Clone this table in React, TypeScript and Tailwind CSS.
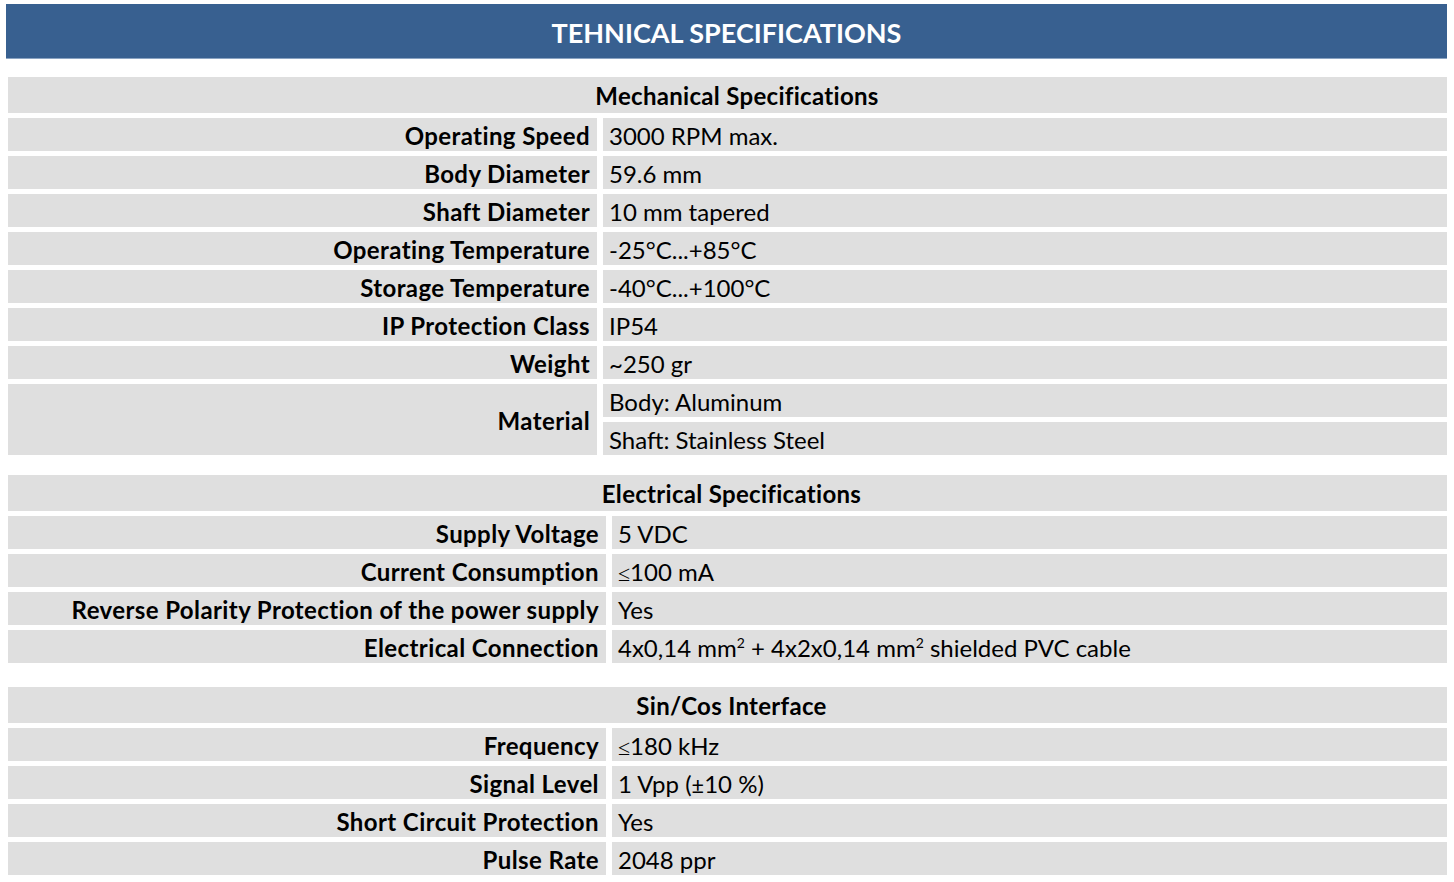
import type { ReactNode } from "react";

type Row = { label: string; values: ReactNode[] };

type Section = {
  title: string;
  titleOffset: string;
  cols: string;
  mt: string;
  rows: Row[];
};

const sq = <sup className="relative -top-[9px] text-[14px]">2</sup>;
const sym = (c: string) => <span className="font-['Noto_Sans'] text-[22px]">{c}</span>;

const sections: Section[] = [
  {
    title: "Mechanical Specifications",
    titleOffset: "pl-[19px]",
    cols: "grid-cols-[589px_1fr]",
    mt: "mt-[18px]",
    rows: [
      { label: "Operating Speed", values: ["3000 RPM max."] },
      { label: "Body Diameter", values: ["59.6 mm"] },
      { label: "Shaft Diameter", values: ["10 mm tapered"] },
      { label: "Operating Temperature", values: ["-25°C...+85°C"] },
      { label: "Storage Temperature", values: ["-40°C...+100°C"] },
      { label: "IP Protection Class", values: ["IP54"] },
      { label: "Weight", values: ["~250 gr"] },
      { label: "Material", values: ["Body: Aluminum", "Shaft: Stainless Steel"] },
    ],
  },
  {
    title: "Electrical Specifications",
    titleOffset: "pl-[8px]",
    cols: "grid-cols-[598px_1fr]",
    mt: "mt-[20px]",
    rows: [
      { label: "Supply Voltage", values: ["5 VDC"] },
      { label: "Current Consumption", values: [<>{sym("≤")}100 mA</>] },
      { label: "Reverse Polarity Protection of the power supply", values: ["Yes"] },
      {
        label: "Electrical Connection",
        values: [
          <>
            4x0,14 mm{sq} + 4x2x0,14 mm{sq} shielded PVC cable
          </>,
        ],
      },
    ],
  },
  {
    title: "Sin/Cos Interface",
    titleOffset: "pl-[8px]",
    cols: "grid-cols-[598px_1fr]",
    mt: "mt-[24px]",
    rows: [
      { label: "Frequency", values: [<>{sym("≤")}180 kHz</>] },
      { label: "Signal Level", values: [<>1 Vpp ({sym("±")}10 %)</>] },
      { label: "Short Circuit Protection", values: ["Yes"] },
      { label: "Pulse Rate", values: ["2048 ppr"] },
    ],
  },
];

function SpecSection({ s }: { s: Section }) {
  return (
    <div className={`grid ${s.cols} gap-x-[6px] gap-y-[5px] ${s.mt}`}>
      <div
        className={`col-span-2 flex h-[36px] items-center justify-center bg-[#dfdfdf] pt-[2px] text-[24px] font-bold tracking-[0.3px] text-black ${s.titleOffset}`}
      >
        {s.title}
      </div>
      {s.rows.map((r) => (
        <div key={r.label} className="contents">
          <div
            className={`flex items-center justify-end bg-[#dfdfdf] pr-[7px] pt-[2px] text-[24px] font-bold tracking-[0.4px] text-black ${
              r.values.length > 1 ? "row-span-2" : "h-[33px]"
            }`}
          >
            {r.label}
          </div>
          {r.values.map((v, i) => (
            <div
              key={i}
              className={`flex h-[33px] items-center bg-[#dfdfdf] pl-[6px] pt-[2px] text-[24px] text-black ${
                i > 0 ? "col-start-2" : ""
              }`}
            >
              <span>{v}</span>
            </div>
          ))}
        </div>
      ))}
    </div>
  );
}

export default function App() {
  return (
    <div
      className="min-h-screen bg-white pt-[4px]"
      style={{ fontFamily: "Lato, 'Open Sans', sans-serif" }}
    >
      <div className="ml-[6px] mr-[7px] flex h-[55px] items-center justify-center border-b border-[#8aa3c2] bg-[#386090] pt-[5px]">
        <h1 className="text-[27px] font-bold text-white">TEHNICAL SPECIFICATIONS</h1>
      </div>
      <div className="ml-[8px] mr-[7px]">
        {sections.map((s) => (
          <SpecSection key={s.title} s={s} />
        ))}
      </div>
    </div>
  );
}
